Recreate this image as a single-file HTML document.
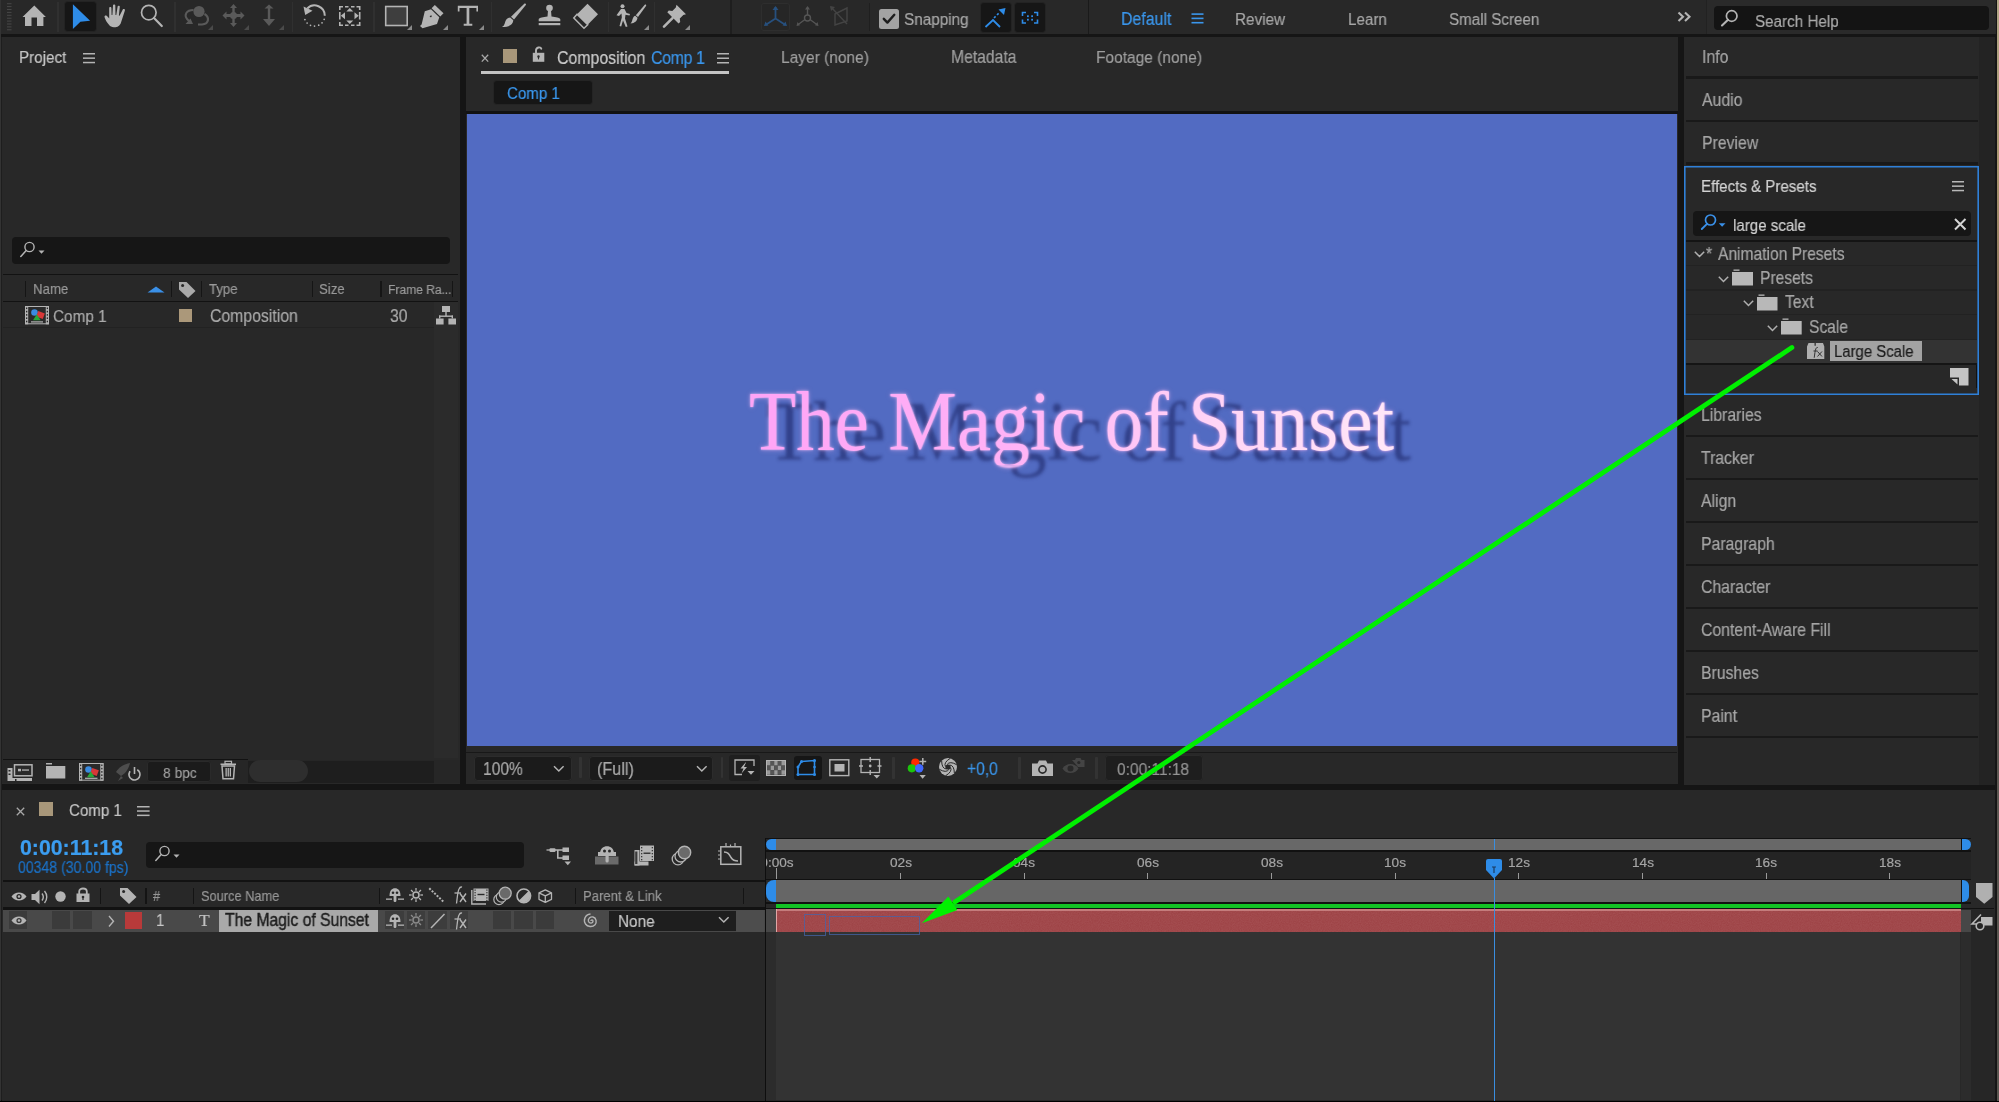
<!DOCTYPE html><html><head><meta charset="utf-8"><style>
html,body{margin:0;padding:0;width:1999px;height:1102px;overflow:hidden;background:#151515}
.a{position:absolute}
.t{white-space:nowrap;line-height:1;font-family:'Liberation Sans',sans-serif;-webkit-text-stroke:0.2px currentColor;will-change:transform}
svg{overflow:visible}
</style></head><body>
<div class="a" style="left:0px;top:0px;width:1999px;height:34px;background:#282828;"></div>
<div class="a" style="left:1.5px;top:37px;width:458.5px;height:747px;background:#282828;"></div>
<div class="a" style="left:466px;top:37px;width:1212px;height:747px;background:#282828;"></div>
<div class="a" style="left:1684px;top:37px;width:312px;height:748px;background:#282828;"></div>
<div class="a" style="left:1.5px;top:790px;width:1994.5px;height:310.5px;background:#282828;"></div>
<div class="a" style="left:0px;top:0px;width:1px;height:34px;background:#1a1a1a;"></div>
<svg class="a" style="left:7.2px;top:0px;" width="5" height="34" viewBox="0 0 5 34"><rect x="0" y="3.2" width="4.5" height="1" fill="#484848"/><rect x="0" y="6.1" width="4.5" height="1" fill="#484848"/><rect x="0" y="9.0" width="4.5" height="1" fill="#484848"/><rect x="0" y="11.9" width="4.5" height="1" fill="#484848"/><rect x="0" y="14.8" width="4.5" height="1" fill="#484848"/><rect x="0" y="17.7" width="4.5" height="1" fill="#484848"/><rect x="0" y="20.6" width="4.5" height="1" fill="#484848"/><rect x="0" y="23.5" width="4.5" height="1" fill="#484848"/><rect x="0" y="26.4" width="4.5" height="1" fill="#484848"/><rect x="0" y="29.3" width="4.5" height="1" fill="#484848"/></svg>
<svg class="a" style="left:22px;top:5px;" width="25" height="22" viewBox="0 0 25 22"><path d="M12.3 0.5 L23.9 12 L21.4 12 L21.4 21 L15 21 L15 12.4 L9.5 12.4 L9.5 21 L3 21 L3 12 L0.5 12 Z" fill="#b4b4b4"/></svg>
<div class="a" style="left:57.0px;top:2px;width:1.6px;height:30px;background:#303030;"></div>
<div class="a" style="left:64.6px;top:1.7px;width:31px;height:29px;background:#161616;border-radius:3px;box-shadow:0 0 0 1px #232323"></div>
<svg class="a" style="left:72px;top:4px;" width="19" height="25" viewBox="0 0 19 25"><path d="M0.9 0.25 L18.1 16.8 L8.4 17.7 L0.9 24.9 Z" fill="#2e8ce8"/></svg>
<svg class="a" style="left:104px;top:4px;" width="23" height="24" viewBox="0 0 23 24"><path d="M6 22 C3 19 1 15 0.5 13 C0.3 12 1.2 11.2 2.2 11.6 C3.3 12.1 4.5 14 5.2 14.5 L5.2 4 C5.2 2.8 7.4 2.8 7.4 4 L7.6 11 L8.4 11 L9 1.5 C9 0.2 11.3 0.2 11.3 1.5 L11.5 11 L12.3 11 L13.6 2.5 C13.8 1.3 15.9 1.5 15.8 2.8 L14.9 11.6 L15.6 11.8 L18.8 5.6 C19.3 4.6 21.3 5.2 20.9 6.4 L17.5 17 C16.5 21 14.5 23.2 11.5 23.2 C9 23.2 7.3 23 6 22 Z" fill="#b4b4b4"/></svg>
<svg class="a" style="left:139px;top:3px;" width="26" height="26" viewBox="0 0 26 26"><circle cx="9.8" cy="9.6" r="7.3" fill="none" stroke="#b4b4b4" stroke-width="1.7"/><path d="M15 15 L22.8 23" stroke="#b4b4b4" stroke-width="2.2" stroke-linecap="round"/></svg>
<div class="a" style="left:174.0px;top:2px;width:1.6px;height:30px;background:#303030;"></div>
<svg class="a" style="left:184px;top:5px;" width="28" height="22" viewBox="0 0 28 22"><circle cx="15" cy="6.5" r="5.6" fill="#5a5a5a"/><path d="M9.5 5 C2 5 0 10 3 14 L5 16" fill="none" stroke="#5a5a5a" stroke-width="2"/><path d="M1.5 19 L9 19 L6.5 13.5 Z" fill="#5a5a5a"/><path d="M20.5 9 C25.5 12 25.5 19 18 19.5 L14 19.5" fill="none" stroke="#5a5a5a" stroke-width="2.2"/></svg>
<svg class="a" style="left:207.5px;top:25.0px;" width="5" height="5" viewBox="0 0 5 5"><path d="M5 0 L5 5 L0 5 Z" fill="#4a4a4a"/></svg>
<svg class="a" style="left:221px;top:4px;" width="26" height="24" viewBox="0 0 26 24"><path d="M12.5 0 L16 4 L13.7 4 L13.7 10 L19.5 10 L19.5 7.5 L23.5 11.5 L19.5 15.5 L19.5 13 L13.7 13 L13.7 19 L16 19 L12.5 23 L9 19 L11.3 19 L11.3 13 L5.5 13 L5.5 15.5 L1.5 11.5 L5.5 7.5 L5.5 10 L11.3 10 L11.3 4 L9 4 Z" fill="#5a5a5a"/><circle cx="12.5" cy="11.5" r="3.5" fill="#5a5a5a"/></svg>
<svg class="a" style="left:243.5px;top:25.0px;" width="5" height="5" viewBox="0 0 5 5"><path d="M5 0 L5 5 L0 5 Z" fill="#4a4a4a"/></svg>
<svg class="a" style="left:261px;top:4px;" width="16" height="23" viewBox="0 0 16 23"><path d="M8 0.5 L12.5 4.5 L9.2 4.5 L9.2 15 L14 15 L8 22 L2 15 L6.8 15 L6.8 4.5 L3.5 4.5 Z" fill="#5a5a5a"/></svg>
<svg class="a" style="left:279.0px;top:25.0px;" width="5" height="5" viewBox="0 0 5 5"><path d="M5 0 L5 5 L0 5 Z" fill="#4a4a4a"/></svg>
<div class="a" style="left:291.5px;top:2px;width:1.6px;height:30px;background:#303030;"></div>
<svg class="a" style="left:303px;top:3.5px;" width="24" height="24" viewBox="0 0 24 24"><path d="M4.26 4.47 A10.3 10.3 0 0 1 21.80 11.80" fill="none" stroke="#b4b4b4" stroke-width="2"/><path d="M0.5 2.5 L2.2 11 L9.5 6.8 Z" fill="#b4b4b4"/><circle cx="21.18" cy="15.33" r="0.85" fill="#b4b4b4"/><circle cx="19.04" cy="18.82" r="0.85" fill="#b4b4b4"/><circle cx="15.71" cy="21.20" r="0.85" fill="#b4b4b4"/><circle cx="11.51" cy="22.10" r="0.85" fill="#b4b4b4"/><circle cx="7.50" cy="21.29" r="0.85" fill="#b4b4b4"/><circle cx="4.12" cy="18.98" r="0.85" fill="#b4b4b4"/><circle cx="1.90" cy="15.54" r="0.85" fill="#b4b4b4"/></svg>
<svg class="a" style="left:338px;top:5px;" width="26" height="22" viewBox="0 0 26 22"><path d="M1.8 5 L1.8 1.8 L5 1.8 M18.5 1.8 L21.7 1.8 L21.7 5 M21.7 17 L21.7 20.2 L18.5 20.2 M5 20.2 L1.8 20.2 L1.8 17" fill="none" stroke="#b4b4b4" stroke-width="1.6"/><path d="M7 1.8 L10.5 1.8 M13 1.8 L16.5 1.8 M7 20.2 L10.5 20.2 M13 20.2 L16.5 20.2" stroke="#b4b4b4" stroke-width="1.6"/><path d="M11.8 3 L15.3 6.5 L8.3 6.5 Z M11.8 19 L15.3 15.5 L8.3 15.5 Z M2.8 10.8 L7 7.3 L7 14.3 Z M20.7 10.8 L16.5 7.3 L16.5 14.3 Z" fill="#b4b4b4"/><rect x="1" y="7" width="1.6" height="7.5" fill="#b4b4b4"/><rect x="20.9" y="7" width="1.6" height="7.5" fill="#b4b4b4"/></svg>
<div class="a" style="left:373.2px;top:2px;width:1.6px;height:30px;background:#303030;"></div>
<svg class="a" style="left:384px;top:5px;" width="26" height="23" viewBox="0 0 26 23"><rect x="1.7" y="1.5" width="21.5" height="19" fill="#3e3e3e" stroke="#b4b4b4" stroke-width="1.6"/></svg>
<svg class="a" style="left:406.5px;top:25.0px;" width="5" height="5" viewBox="0 0 5 5"><path d="M5 0 L5 5 L0 5 Z" fill="#8a8a8a"/></svg>
<svg class="a" style="left:419px;top:4px;" width="26" height="24" viewBox="0 0 26 24"><path d="M15.8 1 L24.5 9.2 L21.3 12.4 L12.6 4.2 Z" fill="#b4b4b4"/><path d="M12 5.2 L20.3 13.2 L18 20 L3.5 24.3 L1 22 L10.7 12.6 C11 13.4 11.8 13.6 12.4 13.1 C13 12.5 12.8 11.6 12 11.3 L2.6 20.6 L5.8 7.3 Z" fill="#b4b4b4"/></svg>
<svg class="a" style="left:442.5px;top:25.0px;" width="5" height="5" viewBox="0 0 5 5"><path d="M5 0 L5 5 L0 5 Z" fill="#8a8a8a"/></svg>
<svg class="a" style="left:457px;top:5px;" width="23" height="22" viewBox="0 0 23 22"><path d="M0.8 0.8 L21 0.8 L21 6.5 L19.4 6.5 L19.4 3 L12.3 3 L12.3 18.8 L15.3 18.8 L15.3 20.8 L6.7 20.8 L6.7 18.8 L9.6 18.8 L9.6 3 L2.5 3 L2.5 6.5 L0.8 6.5 Z" fill="#b4b4b4"/></svg>
<svg class="a" style="left:478.5px;top:25.0px;" width="5" height="5" viewBox="0 0 5 5"><path d="M5 0 L5 5 L0 5 Z" fill="#8a8a8a"/></svg>
<div class="a" style="left:490.5px;top:2px;width:1.6px;height:30px;background:#303030;"></div>
<svg class="a" style="left:501px;top:3px;" width="26" height="25" viewBox="0 0 26 25"><path d="M23.5 0.6 C24.6 0 25.4 1 24.8 2 L13 16.5 L10 13.8 Z" fill="#b4b4b4"/><path d="M9.2 14.5 L12.3 17.3 C12 21.5 8.5 24 1 24 C4 22.5 3.5 19.5 5 17 C6 15.3 7.7 14.5 9.2 14.5 Z" fill="#b4b4b4"/></svg>
<svg class="a" style="left:537px;top:4px;" width="25" height="22" viewBox="0 0 25 22"><circle cx="12.5" cy="4" r="3.3" fill="#b4b4b4"/><path d="M11 6.5 L14 6.5 L14.5 12.5 C19 13 22.5 13.5 23.3 15.2 L23.3 17.2 L1.7 17.2 L1.7 15.2 C2.5 13.5 6 13 10.5 12.5 Z" fill="#b4b4b4"/><rect x="1.7" y="19" width="21.6" height="2.2" fill="#b4b4b4"/></svg>
<svg class="a" style="left:573px;top:3px;" width="26" height="26" viewBox="0 0 26 26"><path d="M14.5 0.8 L25 11.3 L14.7 21.8 L4 11.3 Z" fill="#b4b4b4"/><path d="M4 11.3 L14.7 21.8 L11 25.3 L0.8 15 Z" fill="none" stroke="#b4b4b4" stroke-width="1.5"/></svg>
<div class="a" style="left:607.5px;top:2px;width:1.6px;height:30px;background:#303030;"></div>
<svg class="a" style="left:616px;top:4px;" width="31" height="24" viewBox="0 0 31 24"><circle cx="6.5" cy="2.2" r="2" fill="#b4b4b4"/><path d="M5 5 L8.5 5 L10.5 9 L14 10 L13.5 11.5 L9.5 10.8 L9 14.5 L11.5 22.5 L9.8 23 L7 16.5 L5.2 22.5 L3.5 22 L5.8 13.5 L5.5 9.5 L3 12 L0.5 11.3 Z" fill="#b4b4b4"/><path d="M29 0.5 C30 0.3 30.5 1 30 2 L22 13 L19.8 11.2 Z" fill="#b4b4b4"/><path d="M19.2 11.8 L21.5 13.7 C21 17 19 19 14.5 19.5 C16.3 18 16 16 17 14 C17.5 12.8 18.3 12 19.2 11.8 Z" fill="#b4b4b4"/></svg>
<svg class="a" style="left:643.5px;top:25.0px;" width="5" height="5" viewBox="0 0 5 5"><path d="M5 0 L5 5 L0 5 Z" fill="#8a8a8a"/></svg>
<div class="a" style="left:653.5px;top:2px;width:1.6px;height:30px;background:#303030;"></div>
<svg class="a" style="left:663px;top:4px;" width="24" height="24" viewBox="0 0 24 24"><path d="M13.5 0.8 L23 10.3 L20.3 11 L16.8 14.5 L17.2 18 L15.5 19.5 L4.3 8.3 L5.8 6.6 L9.3 7 L12.8 3.5 Z" fill="#b4b4b4"/><path d="M9.5 14.2 L1 22.7" stroke="#b4b4b4" stroke-width="2.6" stroke-linecap="round"/></svg>
<svg class="a" style="left:685.0px;top:25.0px;" width="5" height="5" viewBox="0 0 5 5"><path d="M5 0 L5 5 L0 5 Z" fill="#8a8a8a"/></svg>
<div class="a" style="left:730.0px;top:0px;width:1.6px;height:34px;background:#1e1e1e;"></div>
<div class="a" style="left:761px;top:3px;width:29px;height:28px;background:#262626;border-radius:3px;box-shadow:inset 0 0 0 1px #2e2e2e"></div>
<svg class="a" style="left:763px;top:6px;" width="25" height="22" viewBox="0 0 25 22"><path d="M12.5 1 L12.5 12.5 M12.5 12.5 L2.5 19 M12.5 12.5 L22.5 19" stroke="#27507e" stroke-width="1.8"/><path d="M12.5 0 L15.5 4 L9.5 4 Z M1 20 L2.5 15.5 L5.5 19.5 Z M24 20 L22.5 15.5 L19.5 19.5 Z" fill="#27507e"/></svg>
<svg class="a" style="left:796px;top:6px;" width="23" height="22" viewBox="0 0 23 22"><circle cx="11.5" cy="12" r="3" fill="none" stroke="#555" stroke-width="1.4"/><path d="M11.5 1 L11.5 9 M9 13.5 L1.5 19 M14 13.5 L21.5 19" stroke="#555" stroke-width="1.4"/><path d="M11.5 0 L14 3.5 L9 3.5 Z M0.5 20 L1.5 16 L4 19.3 Z M22.5 20 L21.5 16 L19 19.3 Z" fill="#555"/></svg>
<svg class="a" style="left:830px;top:6px;" width="20" height="20" viewBox="0 0 20 20"><path d="M5 8 L17 2 L17 15 L5 19 Z" fill="none" stroke="#444" stroke-width="1.4"/><path d="M1 1 L17 18" stroke="#444" stroke-width="1.4"/><path d="M0 0 L5 1 L1 5 Z" fill="#444"/></svg>
<div class="a" style="left:868.5px;top:3px;width:1.6px;height:28px;background:#1f1f1f;"></div>
<div class="a" style="left:879px;top:9px;width:20px;height:19.5px;background:#a3a3a3;border-radius:2.5px"></div>
<svg class="a" style="left:879px;top:9px;" width="20" height="19.5" viewBox="0 0 20 19.5"><path d="M4.8 9.8 L8.4 13.6 L15.3 5.8" fill="none" stroke="#1d1d1d" stroke-width="2.4" stroke-linecap="round" stroke-linejoin="round"/></svg>
<div class="a t" style="left:903.5px;top:10.50px;font-size:17.14px;color:#a6a6a6;font-weight:400;font-family:'Liberation Sans',sans-serif;transform-origin:0 0;transform:scaleX(0.8929);">Snapping</div>
<div class="a" style="left:981px;top:3px;width:29.5px;height:29px;background:#161616;border-radius:3px;box-shadow:0 0 0 1px #232323"></div>
<svg class="a" style="left:983px;top:5px;" width="26" height="25" viewBox="0 0 26 25"><path d="M2.5 22 L10 15 L17 22" fill="none" stroke="#2e8ce8" stroke-width="1.8"/><path d="M11 13 L12.6 11.4 M14 10 L15.6 8.4" stroke="#2e8ce8" stroke-width="1.6"/><path d="M15.5 4.5 L22.5 3 L21 10 Z" fill="#2e8ce8"/></svg>
<div class="a" style="left:1015px;top:3px;width:30px;height:29px;background:#161616;border-radius:3px;box-shadow:0 0 0 1px #232323"></div>
<svg class="a" style="left:1017px;top:5px;" width="26" height="25" viewBox="0 0 26 25"><path d="M5.5 11 L5.5 7.5 L9 7.5 M17 7.5 L20.5 7.5 L20.5 11 M20.5 14.5 L20.5 18 L17 18 M9 18 L5.5 18 L5.5 14.5" fill="none" stroke="#2e8ce8" stroke-width="1.6"/><rect x="10" y="10.3" width="1.8" height="1.8" fill="#2e8ce8"/><rect x="14.2" y="10.3" width="1.8" height="1.8" fill="#2e8ce8"/><rect x="10" y="13.8" width="1.8" height="1.8" fill="#2e8ce8"/><rect x="14.2" y="13.8" width="1.8" height="1.8" fill="#2e8ce8"/></svg>
<div class="a" style="left:1087.5px;top:0px;width:1.5px;height:34px;background:#1a1a1a;"></div>
<div class="a t" style="left:1121px;top:10.50px;font-size:17.81px;color:#3a96ec;font-weight:400;font-family:'Liberation Sans',sans-serif;transform-origin:0 0;transform:scaleX(0.8929);">Default</div>
<svg class="a" style="left:1190.5px;top:12.5px;" width="13" height="11" viewBox="0 0 13 11"><rect x="0.5" y="0.3" width="12" height="1.6" fill="#3a96ec"/><rect x="0.5" y="4.6" width="12" height="1.6" fill="#3a96ec"/><rect x="0.5" y="8.9" width="12" height="1.6" fill="#3a96ec"/></svg>
<div class="a t" style="left:1235px;top:10.50px;font-size:17.14px;color:#a6a6a6;font-weight:400;font-family:'Liberation Sans',sans-serif;transform-origin:0 0;transform:scaleX(0.8929);">Review</div>
<div class="a t" style="left:1348px;top:10.50px;font-size:17.02px;color:#a6a6a6;font-weight:400;font-family:'Liberation Sans',sans-serif;transform-origin:0 0;transform:scaleX(0.8929);">Learn</div>
<div class="a t" style="left:1449px;top:10.50px;font-size:17.02px;color:#a6a6a6;font-weight:400;font-family:'Liberation Sans',sans-serif;transform-origin:0 0;transform:scaleX(0.8929);">Small Screen</div>
<svg class="a" style="left:1677px;top:10.5px;" width="16" height="12" viewBox="0 0 16 12"><path d="M1.5 1.5 L6 5.8 L1.5 10 M8 1.5 L12.5 5.8 L8 10" fill="none" stroke="#b4b4b4" stroke-width="2.1"/></svg>
<div class="a" style="left:1706px;top:0px;width:1.2px;height:34px;background:#222;"></div>
<div class="a" style="left:1707.2px;top:0px;width:288px;height:34px;background:#2a2a2a;"></div>
<div class="a" style="left:1714px;top:6px;width:275px;height:23.5px;background:#141414;border-radius:4px"></div>
<svg class="a" style="left:1720px;top:9px;" width="20" height="18" viewBox="0 0 20 18"><circle cx="11.7" cy="7" r="5.3" fill="none" stroke="#b4b4b4" stroke-width="1.7"/><path d="M8 10.8 L2 16.5" stroke="#b4b4b4" stroke-width="2.1" stroke-linecap="round"/></svg>
<div class="a t" style="left:1754.5px;top:12.50px;font-size:17.02px;color:#aaaaaa;font-weight:400;font-family:'Liberation Sans',sans-serif;transform-origin:0 0;transform:scaleX(0.8929);">Search Help</div>
<div class="a" style="left:1996px;top:0px;width:3px;height:34px;background:#1a1a1a;"></div>
<div class="a t" style="left:19.2px;top:49.40px;font-size:17.02px;color:#c4c4c4;font-weight:400;font-family:'Liberation Sans',sans-serif;transform-origin:0 0;transform:scaleX(0.8929);">Project</div>
<svg class="a" style="left:83px;top:52.8px;" width="12" height="12" viewBox="0 0 12 12"><rect x="0" y="0.00" width="12" height="1.5" fill="#b4b4b4"/><rect x="0" y="4.40" width="12" height="1.5" fill="#b4b4b4"/><rect x="0" y="8.80" width="12" height="1.5" fill="#b4b4b4"/></svg>
<div class="a" style="left:11.8px;top:237px;width:438.2px;height:26.5px;background:#161616;border-radius:4px"></div>
<svg class="a" style="left:19px;top:241px;" width="27" height="18" viewBox="0 0 27 18"><circle cx="10.5" cy="6" r="4.6" fill="none" stroke="#b4b4b4" stroke-width="1.4"/><path d="M7.2 9.5 L1.8 15.5" stroke="#b4b4b4" stroke-width="1.5" stroke-linecap="round"/><path d="M19.5 9.5 L25.5 9.5 L22.5 12.8 Z" fill="#b4b4b4"/></svg>
<div class="a" style="left:3px;top:273.5px;width:455px;height:1.8px;background:#121212;"></div>
<div class="a" style="left:24.7px;top:281px;width:1.3px;height:16px;background:#151515;"></div>
<div class="a" style="left:171px;top:281px;width:1.3px;height:16px;background:#151515;"></div>
<div class="a" style="left:201px;top:281px;width:1.3px;height:16px;background:#151515;"></div>
<div class="a" style="left:311.5px;top:281px;width:1.3px;height:16px;background:#151515;"></div>
<div class="a" style="left:380.4px;top:281px;width:1.3px;height:16px;background:#151515;"></div>
<div class="a" style="left:451.7px;top:281px;width:1.3px;height:16px;background:#151515;"></div>
<div class="a t" style="left:33px;top:282.00px;font-size:14.78px;color:#999999;font-weight:400;font-family:'Liberation Sans',sans-serif;transform-origin:0 0;transform:scaleX(0.8929);">Name</div>
<svg class="a" style="left:146.5px;top:285.5px;" width="19" height="7" viewBox="0 0 19 7"><path d="M0.5 6.5 L9 0.5 L17.5 6.5 Z" fill="#3a90e8"/></svg>
<svg class="a" style="left:177.5px;top:281px;" width="19" height="17" viewBox="0 0 19 17"><path d="M1 1 L8.5 1 L17.5 10 L10 17 L1 8.5 Z" fill="#aaaaaa"/><circle cx="4.6" cy="4.6" r="1.5" fill="#282828"/></svg>
<div class="a t" style="left:209px;top:282.00px;font-size:14.78px;color:#999999;font-weight:400;font-family:'Liberation Sans',sans-serif;transform-origin:0 0;transform:scaleX(0.8929);">Type</div>
<div class="a t" style="left:319px;top:282.00px;font-size:14.78px;color:#999999;font-weight:400;font-family:'Liberation Sans',sans-serif;transform-origin:0 0;transform:scaleX(0.8929);">Size</div>
<div class="a t" style="left:388px;top:283.00px;font-size:13.66px;color:#999999;font-weight:400;font-family:'Liberation Sans',sans-serif;transform-origin:0 0;transform:scaleX(0.8929);letter-spacing:-0.1px">Frame Ra...</div>
<div class="a" style="left:3px;top:300.8px;width:455px;height:1.6px;background:#121212;"></div>
<div class="a" style="left:434.4px;top:302.4px;width:23.6px;height:455.9px;background:#2b2b2b;"></div>
<div class="a" style="left:3px;top:327px;width:431.4px;height:1px;background:#222;"></div>
<svg class="a" style="left:25.4px;top:306.4px;" width="24" height="18.3" viewBox="0 0 24 18.3"><rect x="0.5" y="0.5" width="23" height="17.3" fill="#2a2a2a" stroke="#b4b4b4" stroke-width="1"/><rect x="0" y="0" width="3.2" height="18.3" fill="#b4b4b4"/><rect x="20.8" y="0" width="3.2" height="18.3" fill="#b4b4b4"/><rect x="1" y="1.5" width="1.3" height="1.6" fill="#2a2a2a"/><rect x="21.7" y="1.5" width="1.3" height="1.6" fill="#2a2a2a"/><rect x="1" y="4.8" width="1.3" height="1.6" fill="#2a2a2a"/><rect x="21.7" y="4.8" width="1.3" height="1.6" fill="#2a2a2a"/><rect x="1" y="8.1" width="1.3" height="1.6" fill="#2a2a2a"/><rect x="21.7" y="8.1" width="1.3" height="1.6" fill="#2a2a2a"/><rect x="1" y="11.4" width="1.3" height="1.6" fill="#2a2a2a"/><rect x="21.7" y="11.4" width="1.3" height="1.6" fill="#2a2a2a"/><rect x="1" y="14.7" width="1.3" height="1.6" fill="#2a2a2a"/><rect x="21.7" y="14.7" width="1.3" height="1.6" fill="#2a2a2a"/><rect x="6" y="15.3" width="12" height="1.2" fill="#b4b4b4"/><circle cx="9.5" cy="6.5" r="3.3" fill="#3a8be0"/><rect x="12" y="6" width="7" height="6" fill="#d83838" transform="rotate(20 15.5 9)"/><path d="M8 14.3 L11.8 8.3 L15.6 14.3 Z" fill="#28a838"/></svg>
<div class="a t" style="left:53px;top:308.30px;font-size:17.14px;color:#aaaaaa;font-weight:400;font-family:'Liberation Sans',sans-serif;transform-origin:0 0;transform:scaleX(0.8929);">Comp 1</div>
<div class="a" style="left:178.7px;top:309px;width:13.3px;height:13px;background:#ab987a;"></div>
<div class="a t" style="left:210.4px;top:308.30px;font-size:17.70px;color:#aaaaaa;font-weight:400;font-family:'Liberation Sans',sans-serif;transform-origin:0 0;transform:scaleX(0.8929);">Composition</div>
<div class="a t" style="left:390px;top:308.30px;font-size:17.70px;color:#aaaaaa;font-weight:400;font-family:'Liberation Sans',sans-serif;transform-origin:0 0;transform:scaleX(0.8929);">30</div>
<svg class="a" style="left:436px;top:306px;" width="20" height="19" viewBox="0 0 20 19"><rect x="6" y="0" width="8" height="6" fill="#b4b4b4"/><rect x="9.3" y="6" width="1.4" height="4" fill="#b4b4b4"/><rect x="3" y="9.5" width="14" height="1.4" fill="#b4b4b4"/><rect x="3" y="9.5" width="1.4" height="3" fill="#b4b4b4"/><rect x="15.6" y="9.5" width="1.4" height="3" fill="#b4b4b4"/><rect x="0" y="12.5" width="7.6" height="6" fill="#b4b4b4"/><rect x="12.4" y="12.5" width="7.6" height="6" fill="#b4b4b4"/></svg>
<div class="a" style="left:3px;top:758.8px;width:245px;height:1.6px;background:#121212;"></div>
<div class="a" style="left:1.5px;top:760.4px;width:458.5px;height:23px;background:#262626;"></div>
<div class="a" style="left:248px;top:761px;width:186px;height:22px;background:#1e1e1e;"></div>
<svg class="a" style="left:6.5px;top:763.5px;" width="26" height="17.5" viewBox="0 0 26 17.5"><rect x="7.5" y="0.8" width="17.5" height="11" fill="#2a2a2a" stroke="#b4b4b4" stroke-width="1.5"/><rect x="11" y="4.8" width="3" height="2.5" fill="#b4b4b4"/><rect x="15" y="5.4" width="7" height="1.3" fill="#b4b4b4"/><path d="M0.5 4 L5.5 4 L5.5 14 L25 14 L25 17 L0.5 17 Z" fill="#b4b4b4"/><rect x="1.5" y="6" width="2" height="1.5" fill="#262626"/><rect x="1.5" y="9.5" width="2" height="1.5" fill="#262626"/><rect x="8" y="15" width="1.5" height="2" fill="#262626"/></svg>
<svg class="a" style="left:45.5px;top:762.5px;" width="20" height="16" viewBox="0 0 20 16"><rect x="0" y="3" width="19.3" height="12.5" fill="#b4b4b4"/><rect x="0" y="0" width="6" height="1.5" fill="#b4b4b4"/></svg>
<svg class="a" style="left:78.8px;top:763px;" width="24.5" height="17.7" viewBox="0 0 24.5 17.7"><rect x="0.5" y="0.5" width="23.5" height="16.7" fill="#2a2a2a" stroke="#b4b4b4" stroke-width="1"/><rect x="0" y="0" width="3.2" height="17.7" fill="#b4b4b4"/><rect x="21.3" y="0" width="3.2" height="17.7" fill="#b4b4b4"/><rect x="1" y="1.5" width="1.3" height="1.6" fill="#2a2a2a"/><rect x="22.2" y="1.5" width="1.3" height="1.6" fill="#2a2a2a"/><rect x="1" y="4.8" width="1.3" height="1.6" fill="#2a2a2a"/><rect x="22.2" y="4.8" width="1.3" height="1.6" fill="#2a2a2a"/><rect x="1" y="8.1" width="1.3" height="1.6" fill="#2a2a2a"/><rect x="22.2" y="8.1" width="1.3" height="1.6" fill="#2a2a2a"/><rect x="1" y="11.4" width="1.3" height="1.6" fill="#2a2a2a"/><rect x="22.2" y="11.4" width="1.3" height="1.6" fill="#2a2a2a"/><rect x="1" y="14.7" width="1.3" height="1.6" fill="#2a2a2a"/><rect x="22.2" y="14.7" width="1.3" height="1.6" fill="#2a2a2a"/><rect x="6" y="14.7" width="12.5" height="1.2" fill="#b4b4b4"/><circle cx="9.5" cy="6.5" r="3.3" fill="#3a8be0"/><rect x="12" y="6" width="7" height="6" fill="#d83838" transform="rotate(20 15.5 9)"/><path d="M8 14.3 L11.8 8.3 L15.6 14.3 Z" fill="#28a838"/></svg>
<svg class="a" style="left:115px;top:761.5px;" width="27" height="20" viewBox="0 0 27 20"><path d="M1 10 C4 5 9 2 15 1 C14 6 11 11 6 14 Z" fill="#4d4d4d"/><path d="M6 14 L3 19 L8 16 Z" fill="#4d4d4d"/><circle cx="19.5" cy="12.5" r="5.5" fill="none" stroke="#b4b4b4" stroke-width="1.6" stroke-dasharray="26 8.5" transform="rotate(-60 19.5 12.5)"/><rect x="18.7" y="5" width="1.6" height="7" fill="#b4b4b4"/></svg>
<div class="a" style="left:147px;top:761.2px;width:64px;height:20.8px;background:#1b1b1b;border-radius:3px;box-shadow:inset 0 0 0 1px #2a2a2a"></div>
<div class="a t" style="left:163px;top:764.60px;font-size:15.46px;color:#9e9e9e;font-weight:400;font-family:'Liberation Sans',sans-serif;transform-origin:0 0;transform:scaleX(0.8929);">8 bpc</div>
<svg class="a" style="left:220px;top:761px;" width="17" height="19" viewBox="0 0 17 19"><rect x="0.5" y="2.5" width="15.5" height="1.6" fill="#b4b4b4"/><rect x="5" y="0.3" width="6.5" height="2.6" fill="none" stroke="#b4b4b4" stroke-width="1.2"/><path d="M2 5 L14.5 5 L13.5 17.8 L3 17.8 Z" fill="none" stroke="#b4b4b4" stroke-width="1.5"/><rect x="5.5" y="7" width="1.3" height="8.5" fill="#b4b4b4"/><rect x="9.7" y="7" width="1.3" height="8.5" fill="#b4b4b4"/><rect x="7.6" y="7" width="1.3" height="8.5" fill="#b4b4b4"/></svg>
<div class="a" style="left:249px;top:760.2px;width:59px;height:22px;background:#2e2e2e;border-radius:11px"></div>
<svg class="a" style="left:480.5px;top:53.5px;" width="8" height="9" viewBox="0 0 8 9"><path d="M0.8 0.8 L7.2 7.6 M7.2 0.8 L0.8 7.6" stroke="#a8a8a8" stroke-width="1.3"/></svg>
<div class="a" style="left:502.8px;top:48.8px;width:14.2px;height:14.5px;background:#a8977a;"></div>
<svg class="a" style="left:532px;top:46px;" width="13" height="17" viewBox="0 0 13 17"><path d="M4 7.5 L4 4.5 C4 1.3 8.8 0.2 9.3 2.8" fill="none" stroke="#b4b4b4" stroke-width="1.9" stroke-linecap="round"/><rect x="0.8" y="6.8" width="11.5" height="9" fill="#b4b4b4"/><path d="M6.5 9.3 C5.2 9.3 5 10.7 5.6 11.2 L6.5 14 L7.4 11.2 C8 10.7 7.8 9.3 6.5 9.3 Z" fill="#282828"/></svg>
<div class="a t" style="left:557.3px;top:49.50px;font-size:17.81px;color:#cdcdcd;font-weight:400;font-family:'Liberation Sans',sans-serif;transform-origin:0 0;transform:scaleX(0.8929);">Composition</div>
<div class="a t" style="left:650.6px;top:49.50px;font-size:17.81px;color:#3a96ec;font-weight:400;font-family:'Liberation Sans',sans-serif;transform-origin:0 0;transform:scaleX(0.8929);letter-spacing:-0.4px">Comp 1</div>
<svg class="a" style="left:717px;top:52.8px;" width="12" height="12" viewBox="0 0 12 12"><rect x="0" y="0.00" width="12" height="1.5" fill="#b4b4b4"/><rect x="0" y="4.50" width="12" height="1.5" fill="#b4b4b4"/><rect x="0" y="9.00" width="12" height="1.5" fill="#b4b4b4"/></svg>
<div class="a" style="left:481px;top:71.3px;width:248px;height:3px;background:#c4c4c4;"></div>
<div class="a t" style="left:780.5px;top:49.30px;font-size:17.36px;color:#9e9e9e;font-weight:400;font-family:'Liberation Sans',sans-serif;transform-origin:0 0;transform:scaleX(0.8929);">Layer (none)</div>
<div class="a t" style="left:951px;top:49.30px;font-size:17.58px;color:#9e9e9e;font-weight:400;font-family:'Liberation Sans',sans-serif;transform-origin:0 0;transform:scaleX(0.8929);">Metadata</div>
<div class="a t" style="left:1095.7px;top:49.30px;font-size:17.36px;color:#9e9e9e;font-weight:400;font-family:'Liberation Sans',sans-serif;transform-origin:0 0;transform:scaleX(0.8929);">Footage (none)</div>
<div class="a" style="left:493.8px;top:81px;width:97.8px;height:23.3px;background:#161616;border-radius:3px;box-shadow:0 0 0 1px #242424"></div>
<div class="a t" style="left:506.5px;top:85.70px;font-size:16.91px;color:#3a96ec;font-weight:400;font-family:'Liberation Sans',sans-serif;transform-origin:0 0;transform:scaleX(0.8929);">Comp 1</div>
<div class="a" style="left:466px;top:111px;width:1212px;height:2.5px;background:#121212;"></div>
<div class="a" style="left:466.7px;top:113.5px;width:1210.3px;height:632.5px;background:#526bc2;"></div>
<div class="a" style="left:466px;top:751.5px;width:1211px;height:1.3px;background:#181818;"></div>
<div class="a t" style="left:766px;top:389.9px;font-family:'Liberation Serif',serif;font-size:84.5px;transform-origin:0 0;transform:scaleX(0.913);-webkit-text-stroke:0;color:transparent;text-shadow:0 0 3.5px rgba(30,40,105,0.62)">The Magic of Sunset</div>
<div class="a t" style="left:749px;top:379.9px;font-family:'Liberation Serif',serif;font-size:84.5px;transform-origin:0 0;transform:scaleX(0.913);-webkit-text-stroke:0;color:transparent;text-shadow:0 0 2px rgba(255,190,250,0.9),0 0 5px rgba(255,190,250,0.5)">The Magic of Sunset</div>
<div class="a t" style="left:749px;top:379.9px;font-family:'Liberation Serif',serif;font-size:84.5px;transform-origin:0 0;transform:scaleX(0.913);-webkit-text-stroke:0;color:transparent;background:linear-gradient(90deg,#ffa4f6 0%,#ffb2f6 40%,#ffd4f6 72%,#ffe8f8 100%);-webkit-background-clip:text;background-clip:text">The Magic of Sunset</div>
<div class="a" style="left:473.6px;top:755.6px;width:98px;height:25.4px;background:#1b1b1b;border-radius:4px;box-shadow:inset 0 0 0 1px #2c2c2c"></div>
<div class="a t" style="left:483.2px;top:760.80px;font-size:17.47px;color:#aaaaaa;font-weight:400;font-family:'Liberation Sans',sans-serif;transform-origin:0 0;transform:scaleX(0.8929);">100%</div>
<svg class="a" style="left:553px;top:764.5px;" width="12" height="8" viewBox="0 0 12 8"><path d="M1 1.2 L5.8 6 L10.6 1.2" fill="none" stroke="#b4b4b4" stroke-width="1.5"/></svg>
<div class="a" style="left:579px;top:757px;width:2.5px;height:21px;background:#333;border-radius:1px"></div>
<div class="a" style="left:588.6px;top:755.6px;width:124.4px;height:25.4px;background:#1b1b1b;border-radius:4px;box-shadow:inset 0 0 0 1px #2c2c2c"></div>
<div class="a t" style="left:597.2px;top:759.80px;font-size:18.14px;color:#aaaaaa;font-weight:400;font-family:'Liberation Sans',sans-serif;transform-origin:0 0;transform:scaleX(0.8929);">(Full)</div>
<svg class="a" style="left:695.5px;top:764.5px;" width="12" height="8" viewBox="0 0 12 8"><path d="M1 1.2 L5.8 6 L10.6 1.2" fill="none" stroke="#b4b4b4" stroke-width="1.5"/></svg>
<div class="a" style="left:720.5px;top:757px;width:2.5px;height:21px;background:#333;border-radius:1px"></div>
<div class="a" style="left:729px;top:754.8px;width:31px;height:26.6px;background:#1f1f1f;border-radius:3px"></div>
<svg class="a" style="left:734px;top:758.5px;" width="21" height="18" viewBox="0 0 21 18"><path d="M8 15.5 L1 15.5 L1 1 L20 1 L20 7" fill="none" stroke="#b4b4b4" stroke-width="1.3"/><path d="M11.5 3.5 L6.5 9.5 L9.5 9.5 L7.5 14.5 L13 8 L10 8 L12 3.5 Z" fill="#b4b4b4"/><path d="M13.5 12 L20.5 12 L17 15.8 Z" fill="#b4b4b4"/></svg>
<svg class="a" style="left:766px;top:760px;" width="20" height="16" viewBox="0 0 20 16"><rect x="0.5" y="0.5" width="19" height="15" fill="none" stroke="#b4b4b4" stroke-width="1"/><rect x="1.0" y="1.0" width="3.6" height="4.6" fill="#9a9a9a"/><rect x="1.0" y="5.6" width="3.6" height="4.6" fill="#555"/><rect x="1.0" y="10.2" width="3.6" height="4.6" fill="#9a9a9a"/><rect x="4.6" y="1.0" width="3.6" height="4.6" fill="#555"/><rect x="4.6" y="5.6" width="3.6" height="4.6" fill="#9a9a9a"/><rect x="4.6" y="10.2" width="3.6" height="4.6" fill="#555"/><rect x="8.2" y="1.0" width="3.6" height="4.6" fill="#9a9a9a"/><rect x="8.2" y="5.6" width="3.6" height="4.6" fill="#555"/><rect x="8.2" y="10.2" width="3.6" height="4.6" fill="#9a9a9a"/><rect x="11.8" y="1.0" width="3.6" height="4.6" fill="#555"/><rect x="11.8" y="5.6" width="3.6" height="4.6" fill="#9a9a9a"/><rect x="11.8" y="10.2" width="3.6" height="4.6" fill="#555"/><rect x="15.4" y="1.0" width="3.6" height="4.6" fill="#9a9a9a"/><rect x="15.4" y="5.6" width="3.6" height="4.6" fill="#555"/><rect x="15.4" y="10.2" width="3.6" height="4.6" fill="#9a9a9a"/></svg>
<div class="a" style="left:793.5px;top:756px;width:28.3px;height:24px;background:#161616;border-radius:3px"></div>
<svg class="a" style="left:796px;top:758px;" width="23" height="19" viewBox="0 0 23 19"><path d="M5.5 3.5 L18.5 2.5 L18.5 16.5 L2 16.5 L2 9 Z" fill="none" stroke="#2e8ce8" stroke-width="1.6"/><circle cx="5.5" cy="3.5" r="1.5" fill="#2e8ce8"/><circle cx="18.5" cy="2.5" r="1.5" fill="#2e8ce8"/><circle cx="18.5" cy="16.5" r="1.5" fill="#2e8ce8"/><circle cx="2" cy="16.5" r="1.5" fill="#2e8ce8"/><circle cx="2" cy="9" r="1.5" fill="#2e8ce8"/><circle cx="18.5" cy="9" r="1.3" fill="#2e8ce8"/></svg>
<svg class="a" style="left:829px;top:758.5px;" width="21" height="18" viewBox="0 0 21 18"><rect x="0.8" y="0.8" width="19" height="15.8" fill="none" stroke="#b4b4b4" stroke-width="1.4"/><rect x="5.5" y="5" width="10" height="7.5" fill="#b4b4b4"/></svg>
<svg class="a" style="left:858.5px;top:757px;" width="23" height="22" viewBox="0 0 23 22"><rect x="2" y="2.5" width="18.5" height="13" fill="none" stroke="#b4b4b4" stroke-width="1.3"/><path d="M11.2 0 L11.2 5 M11.2 13 L11.2 18 M0 9 L4 9 M18.5 9 L22.5 9" stroke="#b4b4b4" stroke-width="1.4"/><circle cx="11.2" cy="9" r="1.4" fill="#b4b4b4"/><path d="M14.5 18 L21 18 L17.8 21.5 Z" fill="#b4b4b4"/></svg>
<div class="a" style="left:892px;top:757px;width:2.5px;height:22px;background:#333;border-radius:1px"></div>
<svg class="a" style="left:906px;top:757px;" width="22" height="23" viewBox="0 0 22 23"><circle cx="9.3" cy="5.5" r="4.1" fill="#ff2a00"/><circle cx="5.8" cy="11.3" r="4.1" fill="#1cc40c"/><circle cx="13.2" cy="11.3" r="4.2" fill="#4068ff"/><path d="M16.8 1 L16.8 7.8 M13.4 4.4 L20.2 4.4" stroke="#b4b4b4" stroke-width="1.5"/><path d="M13.5 18 L19.8 18 L16.6 21.8 Z" fill="#b4b4b4"/></svg>
<svg class="a" style="left:939px;top:758px;" width="18" height="18" viewBox="0 0 18 18"><circle cx="9" cy="9" r="9" fill="#b4b4b4"/><path d="M11.56 9.45 Q13.60 13.60 6.67 17.69" fill="none" stroke="#282828" stroke-width="1"/><path d="M9.89 11.44 Q7.32 15.28 0.31 11.33" fill="none" stroke="#282828" stroke-width="1"/><path d="M7.33 10.99 Q2.72 10.68 2.64 2.64" fill="none" stroke="#282828" stroke-width="1"/><path d="M6.44 8.55 Q4.40 4.40 11.33 0.31" fill="none" stroke="#282828" stroke-width="1"/><path d="M8.11 6.56 Q10.68 2.72 17.69 6.67" fill="none" stroke="#282828" stroke-width="1"/><path d="M10.67 7.01 Q15.28 7.32 15.36 15.36" fill="none" stroke="#282828" stroke-width="1"/><circle cx="9" cy="9" r="2.6" fill="#282828"/></svg>
<div class="a t" style="left:967.2px;top:761.00px;font-size:17.47px;color:#3a96ec;font-weight:400;font-family:'Liberation Sans',sans-serif;transform-origin:0 0;transform:scaleX(0.8929);">+0,0</div>
<div class="a" style="left:1018px;top:757px;width:2.5px;height:22px;background:#333;border-radius:1px"></div>
<svg class="a" style="left:1032px;top:760px;" width="21" height="16" viewBox="0 0 21 16"><path d="M0 3.5 L5.5 3.5 L7 0.5 L14 0.5 L15.5 3.5 L21 3.5 L21 16 L0 16 Z" fill="#b4b4b4"/><circle cx="10.5" cy="9.5" r="3.6" fill="none" stroke="#282828" stroke-width="1.6"/></svg>
<svg class="a" style="left:1062px;top:757px;" width="23" height="19" viewBox="0 0 23 19"><path d="M0.5 11.5 C4 5.5 13 5.5 16.5 11.5 C13 17.5 4 17.5 0.5 11.5 Z" fill="#444"/><circle cx="8.5" cy="11.5" r="3" fill="#282828"/><path d="M10 3 L13 3 L14 1 L18.5 1 L19.5 3 L22.5 3 L22.5 10 L16 10 Z" fill="#444"/><circle cx="16.8" cy="5.5" r="1.6" fill="#282828"/></svg>
<div class="a" style="left:1095.4px;top:757px;width:2.5px;height:22px;background:#333;border-radius:1px"></div>
<div class="a" style="left:1104.7px;top:755px;width:98.3px;height:26px;background:#1e1e1e;border-radius:4px;box-shadow:inset 0 0 0 1px #2a2a2a"></div>
<div class="a t" style="left:1117.4px;top:760.80px;font-size:17.36px;color:#949494;font-weight:400;font-family:'Liberation Sans',sans-serif;transform-origin:0 0;transform:scaleX(0.8929);">0:00:11:18</div>
<div class="a" style="left:1979px;top:37px;width:17px;height:748px;background:#232323;"></div>
<div class="a t" style="left:1701.7px;top:49.30px;font-size:17.70px;color:#a5a5a5;font-weight:400;font-family:'Liberation Sans',sans-serif;transform-origin:0 0;transform:scaleX(0.8929);">Info</div>
<div class="a t" style="left:1701.7px;top:92.30px;font-size:17.70px;color:#a5a5a5;font-weight:400;font-family:'Liberation Sans',sans-serif;transform-origin:0 0;transform:scaleX(0.8929);">Audio</div>
<div class="a t" style="left:1701.7px;top:135.30px;font-size:17.70px;color:#a5a5a5;font-weight:400;font-family:'Liberation Sans',sans-serif;transform-origin:0 0;transform:scaleX(0.8929);">Preview</div>
<div class="a" style="left:1686px;top:76.3px;width:291.5px;height:2.3px;background:#191919;"></div>
<div class="a" style="left:1686px;top:119.5px;width:291.5px;height:2.3px;background:#191919;"></div>
<div class="a" style="left:1686px;top:162.3px;width:291.5px;height:2.3px;background:#191919;"></div>
<div class="a t" style="left:1701px;top:407.20px;font-size:17.70px;color:#a5a5a5;font-weight:400;font-family:'Liberation Sans',sans-serif;transform-origin:0 0;transform:scaleX(0.8929);">Libraries</div>
<div class="a t" style="left:1701px;top:450.20px;font-size:17.70px;color:#a5a5a5;font-weight:400;font-family:'Liberation Sans',sans-serif;transform-origin:0 0;transform:scaleX(0.8929);">Tracker</div>
<div class="a t" style="left:1701px;top:493.20px;font-size:17.70px;color:#a5a5a5;font-weight:400;font-family:'Liberation Sans',sans-serif;transform-origin:0 0;transform:scaleX(0.8929);">Align</div>
<div class="a t" style="left:1701px;top:536.20px;font-size:17.70px;color:#a5a5a5;font-weight:400;font-family:'Liberation Sans',sans-serif;transform-origin:0 0;transform:scaleX(0.8929);">Paragraph</div>
<div class="a t" style="left:1701px;top:579.20px;font-size:17.70px;color:#a5a5a5;font-weight:400;font-family:'Liberation Sans',sans-serif;transform-origin:0 0;transform:scaleX(0.8929);">Character</div>
<div class="a t" style="left:1701px;top:622.20px;font-size:17.70px;color:#a5a5a5;font-weight:400;font-family:'Liberation Sans',sans-serif;transform-origin:0 0;transform:scaleX(0.8929);">Content-Aware Fill</div>
<div class="a t" style="left:1701px;top:665.20px;font-size:17.70px;color:#a5a5a5;font-weight:400;font-family:'Liberation Sans',sans-serif;transform-origin:0 0;transform:scaleX(0.8929);">Brushes</div>
<div class="a t" style="left:1701px;top:708.20px;font-size:17.70px;color:#a5a5a5;font-weight:400;font-family:'Liberation Sans',sans-serif;transform-origin:0 0;transform:scaleX(0.8929);">Paint</div>
<div class="a" style="left:1686px;top:434.8px;width:291.5px;height:2.3px;background:#191919;"></div>
<div class="a" style="left:1686px;top:477.8px;width:291.5px;height:2.3px;background:#191919;"></div>
<div class="a" style="left:1686px;top:520.8px;width:291.5px;height:2.3px;background:#191919;"></div>
<div class="a" style="left:1686px;top:563.8px;width:291.5px;height:2.3px;background:#191919;"></div>
<div class="a" style="left:1686px;top:606.8px;width:291.5px;height:2.3px;background:#191919;"></div>
<div class="a" style="left:1686px;top:649.8px;width:291.5px;height:2.3px;background:#191919;"></div>
<div class="a" style="left:1686px;top:692.8px;width:291.5px;height:2.3px;background:#191919;"></div>
<div class="a" style="left:1686px;top:735.8px;width:291.5px;height:2.3px;background:#191919;"></div>
<div class="a" style="left:1684px;top:166px;width:295px;height:229px;background:#282828;box-shadow:inset 0 0 0 1.6px #2f80d8"></div>
<div class="a t" style="left:1701.3px;top:179.20px;font-size:16.91px;color:#d2d2d2;font-weight:400;font-family:'Liberation Sans',sans-serif;transform-origin:0 0;transform:scaleX(0.8929);">Effects &amp; Presets</div>
<svg class="a" style="left:1951.5px;top:181px;" width="12" height="12" viewBox="0 0 12 12"><rect x="0" y="0.00" width="12" height="1.5" fill="#b8b8b8"/><rect x="0" y="4.40" width="12" height="1.5" fill="#b8b8b8"/><rect x="0" y="8.80" width="12" height="1.5" fill="#b8b8b8"/></svg>
<div class="a" style="left:1692.6px;top:210.5px;width:278px;height:25.7px;background:#161616;border-radius:4px"></div>
<svg class="a" style="left:1700px;top:213px;" width="27" height="18" viewBox="0 0 27 18"><circle cx="10.5" cy="7" r="5" fill="none" stroke="#3a90e8" stroke-width="1.7"/><path d="M7 10.8 L1.8 16" stroke="#3a90e8" stroke-width="1.9" stroke-linecap="round"/><path d="M18.8 10.3 L25.5 10.3 L22.1 13.8 Z" fill="#3a90e8"/></svg>
<div class="a t" style="left:1733px;top:217.80px;font-size:16.91px;color:#d0d0d0;font-weight:400;font-family:'Liberation Sans',sans-serif;transform-origin:0 0;transform:scaleX(0.8929);">large scale</div>
<svg class="a" style="left:1953.5px;top:218px;" width="13" height="13" viewBox="0 0 13 13"><path d="M1 1 L11.5 11.5 M11.5 1 L1 11.5" stroke="#d4d4d4" stroke-width="2"/></svg>
<div class="a" style="left:1685.6px;top:240px;width:291.8px;height:2.3px;background:#141414;"></div>
<div class="a" style="left:1685.6px;top:264.8px;width:291.8px;height:1.2px;background:#222222;"></div>
<div class="a" style="left:1685.6px;top:289.4px;width:291.8px;height:1.2px;background:#222222;"></div>
<div class="a" style="left:1685.6px;top:313.9px;width:291.8px;height:1.2px;background:#222222;"></div>
<div class="a" style="left:1685.6px;top:338.5px;width:291.8px;height:1.2px;background:#222222;"></div>
<div class="a" style="left:1685.6px;top:339.7px;width:291.8px;height:23px;background:#333333;"></div>
<div class="a" style="left:1685.6px;top:362.6px;width:291.8px;height:2.4px;background:#151515;"></div>
<svg class="a" style="left:1693.5px;top:251px;" width="11" height="7" viewBox="0 0 11 7"><path d="M0.8 0.8 L5.5 5.5 L10.2 0.8" fill="none" stroke="#b0b0b0" stroke-width="1.5"/></svg>
<div class="a t" style="left:1706.3px;top:245.70px;font-size:17.47px;color:#a5a5a5;font-weight:400;font-family:'Liberation Sans',sans-serif;transform-origin:0 0;transform:scaleX(0.8929);">*</div>
<div class="a t" style="left:1718px;top:245.70px;font-size:17.47px;color:#a5a5a5;font-weight:400;font-family:'Liberation Sans',sans-serif;transform-origin:0 0;transform:scaleX(0.8929);">Animation Presets</div>
<svg class="a" style="left:1718px;top:275.5px;" width="11" height="7" viewBox="0 0 11 7"><path d="M0.8 0.8 L5.5 5.5 L10.2 0.8" fill="none" stroke="#b0b0b0" stroke-width="1.5"/></svg>
<svg class="a" style="left:1732px;top:269px;" width="21" height="16.5" viewBox="0 0 21 16.5"><rect x="0" y="3" width="21" height="13.5" fill="#b8b8b8"/><rect x="1.5" y="0.5" width="6" height="1.3" fill="#b8b8b8"/></svg>
<div class="a t" style="left:1760px;top:270.10px;font-size:17.47px;color:#a5a5a5;font-weight:400;font-family:'Liberation Sans',sans-serif;transform-origin:0 0;transform:scaleX(0.8929);">Presets</div>
<svg class="a" style="left:1742.5px;top:300px;" width="11" height="7" viewBox="0 0 11 7"><path d="M0.8 0.8 L5.5 5.5 L10.2 0.8" fill="none" stroke="#b0b0b0" stroke-width="1.5"/></svg>
<svg class="a" style="left:1756.7px;top:293.5px;" width="20.5" height="16.5" viewBox="0 0 20.5 16.5"><rect x="0" y="3" width="20.5" height="13.5" fill="#b8b8b8"/><rect x="1.5" y="0.5" width="6" height="1.3" fill="#b8b8b8"/></svg>
<div class="a t" style="left:1784.5px;top:294.30px;font-size:17.47px;color:#a5a5a5;font-weight:400;font-family:'Liberation Sans',sans-serif;transform-origin:0 0;transform:scaleX(0.8929);">Text</div>
<svg class="a" style="left:1766.7px;top:324.5px;" width="11" height="7" viewBox="0 0 11 7"><path d="M0.8 0.8 L5.5 5.5 L10.2 0.8" fill="none" stroke="#b0b0b0" stroke-width="1.5"/></svg>
<svg class="a" style="left:1780.8px;top:318px;" width="20.7" height="16.5" viewBox="0 0 20.7 16.5"><rect x="0" y="3" width="20.7" height="13.5" fill="#b8b8b8"/><rect x="1.5" y="0.5" width="6" height="1.3" fill="#b8b8b8"/></svg>
<div class="a t" style="left:1808.5px;top:318.70px;font-size:17.47px;color:#a5a5a5;font-weight:400;font-family:'Liberation Sans',sans-serif;transform-origin:0 0;transform:scaleX(0.8929);">Scale</div>
<svg class="a" style="left:1807px;top:343.2px;" width="17.5" height="16.2" viewBox="0 0 17.5 16.2"><path d="M0 3.5 L1.5 0 L7.5 0 L7.5 2.8 L8.8 2.8 L8.8 0 L16 0 L17.3 3.5 L17.3 16 L0 16 Z" fill="#b0b0b0"/><path d="M7.2 14.8 C7.8 11 8 7.5 9 5.5 C9.5 4.5 10.3 4.3 11 4.6 M6.5 8 L10.5 8 M10.5 8.5 L15 13.5 M15 8.5 L10.5 13.5" fill="none" stroke="#333" stroke-width="1"/></svg>
<div class="a" style="left:1829.8px;top:340.7px;width:91.9px;height:20.1px;background:#a3a3a3;"></div>
<div class="a t" style="left:1833.5px;top:344.00px;font-size:16.69px;color:#1c1c1c;font-weight:400;font-family:'Liberation Sans',sans-serif;transform-origin:0 0;transform:scaleX(0.8929);">Large Scale</div>
<svg class="a" style="left:1950px;top:368px;" width="18.5" height="17.5" viewBox="0 0 18.5 17.5"><path d="M0 0 L18.5 0 L18.5 17.5 L9 17.5 L9 9.5 L0 9.5 Z" fill="#c4c4c4"/><path d="M1.5 11 L7.5 11 L7.5 16.5 Z" fill="#c4c4c4"/></svg>
<div class="a" style="left:1976px;top:365px;width:1.3px;height:23px;background:#111;"></div>
<svg class="a" style="left:16px;top:807px;" width="9.5" height="9" viewBox="0 0 9.5 9"><path d="M0.8 0.8 L8.2 8.2 M8.2 0.8 L0.8 8.2" stroke="#a8a8a8" stroke-width="1.3"/></svg>
<div class="a" style="left:38.5px;top:802px;width:14.7px;height:14px;background:#a8977a;"></div>
<div class="a t" style="left:68.6px;top:803.00px;font-size:16.91px;color:#c4c4c4;font-weight:400;font-family:'Liberation Sans',sans-serif;transform-origin:0 0;transform:scaleX(0.8929);">Comp 1</div>
<svg class="a" style="left:137px;top:806px;" width="12.6" height="12" viewBox="0 0 12.6 12"><rect x="0" y="0.00" width="12.6" height="1.5" fill="#b4b4b4"/><rect x="0" y="4.30" width="12.6" height="1.5" fill="#b4b4b4"/><rect x="0" y="8.60" width="12.6" height="1.5" fill="#b4b4b4"/></svg>
<div class="a t" style="left:20.3px;top:837.70px;font-size:21.30px;color:#3b9df0;font-weight:700;font-family:'Liberation Sans',sans-serif;">0:00:11:18</div>
<div class="a t" style="left:17.5px;top:860.30px;font-size:15.79px;color:#1b70c4;font-weight:400;font-family:'Liberation Sans',sans-serif;transform-origin:0 0;transform:scaleX(0.8929);">00348 (30.00 fps)</div>
<div class="a" style="left:145.6px;top:842px;width:378.4px;height:25.6px;background:#161616;border-radius:4px"></div>
<svg class="a" style="left:154px;top:845px;" width="27" height="18" viewBox="0 0 27 18"><circle cx="10.5" cy="6" r="4.6" fill="none" stroke="#b4b4b4" stroke-width="1.4"/><path d="M7.2 9.5 L1.8 15.5" stroke="#b4b4b4" stroke-width="1.5" stroke-linecap="round"/><path d="M19.5 9.5 L25.5 9.5 L22.5 12.8 Z" fill="#b4b4b4"/></svg>
<svg class="a" style="left:546px;top:846.5px;" width="26" height="19" viewBox="0 0 26 19"><path d="M0.5 3 L5 3" stroke="#b4b4b4" stroke-width="1.3"/><rect x="3.5" y="1.3" width="6" height="3.6" rx="1" fill="#b4b4b4"/><path d="M9 3 L19 3 M11.8 3 L11.8 11 L19 11" fill="none" stroke="#b4b4b4" stroke-width="1.6"/><rect x="16.5" y="0.5" width="6.5" height="4.5" fill="#b4b4b4"/><rect x="16.5" y="8.5" width="6.5" height="4.5" fill="#b4b4b4"/><path d="M18.5 14.5 L25 14.5 L21.8 18.2 Z" fill="#b4b4b4"/></svg>
<svg class="a" style="left:595px;top:845.5px;" width="24" height="19" viewBox="0 0 24 19"><path d="M5 8 C5 2.5 8.5 0.3 12 0.3 C15.5 0.3 19 2.5 19 8 Z" fill="#b4b4b4"/><rect x="3" y="6" width="18" height="4" fill="#b4b4b4"/><circle cx="9.5" cy="5" r="1.5" fill="#282828"/><circle cx="14.5" cy="5" r="1.5" fill="#282828"/><rect x="0" y="10.5" width="23.5" height="8" fill="#6a6a6a"/><rect x="10.5" y="8" width="3.2" height="8.5" rx="1.5" fill="#b4b4b4"/></svg>
<svg class="a" style="left:634px;top:844.5px;" width="21" height="21" viewBox="0 0 21 21"><rect x="6" y="0.5" width="14" height="15.5" fill="#b4b4b4"/><rect x="0.5" y="5" width="5" height="15.5" fill="#b4b4b4"/><rect x="0.5" y="16.5" width="14" height="4" fill="#b4b4b4"/><rect x="1.2" y="6.5" width="2.2" height="12.5" fill="#3a3a3a"/><rect x="9.5" y="7.5" width="7" height="1.5" fill="#3a3a3a"/><rect x="7" y="2.0" width="1.3" height="1.3" fill="#3a3a3a"/><rect x="17.7" y="2.0" width="1.3" height="1.3" fill="#3a3a3a"/><rect x="7" y="5.0" width="1.3" height="1.3" fill="#3a3a3a"/><rect x="17.7" y="5.0" width="1.3" height="1.3" fill="#3a3a3a"/><rect x="7" y="8.0" width="1.3" height="1.3" fill="#3a3a3a"/><rect x="17.7" y="8.0" width="1.3" height="1.3" fill="#3a3a3a"/><rect x="7" y="11.0" width="1.3" height="1.3" fill="#3a3a3a"/><rect x="17.7" y="11.0" width="1.3" height="1.3" fill="#3a3a3a"/><rect x="7" y="14.0" width="1.3" height="1.3" fill="#3a3a3a"/><rect x="17.7" y="14.0" width="1.3" height="1.3" fill="#3a3a3a"/></svg>
<svg class="a" style="left:671px;top:844.5px;" width="21" height="21" viewBox="0 0 21 21"><circle cx="7" cy="14" r="5.8" fill="none" stroke="#b4b4b4" stroke-width="1.3"/><circle cx="9.8" cy="11.2" r="5.8" fill="#282828" stroke="#b4b4b4" stroke-width="1.3"/><circle cx="13.5" cy="7.5" r="6.2" fill="#6a6a6a" stroke="#b4b4b4" stroke-width="1.4"/></svg>
<svg class="a" style="left:718px;top:843px;" width="24" height="22" viewBox="0 0 24 22"><rect x="2.8" y="3.8" width="20" height="17.5" fill="none" stroke="#b4b4b4" stroke-width="1.5"/><path d="M6 9 C10 9 11 11 13 14.5 C15 17.5 16.5 18 20 18" fill="none" stroke="#b4b4b4" stroke-width="1.5"/><path d="M8 0 L8 3.5 M12.5 1.5 L12.5 3.5 M17 0 L17 3.5 M0 8 L2.5 8 M0 12 L2.5 12 M0 16 L2.5 16" stroke="#b4b4b4" stroke-width="1.2"/></svg>
<div class="a" style="left:3px;top:880.3px;width:761.5px;height:2.1px;background:#121212;"></div>
<svg class="a" style="left:11px;top:891px;" width="16" height="11" viewBox="0 0 16 11"><path d="M0.5 5.5 C4 0.3 12 0.3 15.5 5.5 C12 10.7 4 10.7 0.5 5.5 Z" fill="#b4b4b4"/><circle cx="8" cy="5.5" r="2.6" fill="#282828"/><circle cx="8" cy="5.5" r="1.2" fill="#b4b4b4"/></svg>
<svg class="a" style="left:30.5px;top:888.5px;" width="18" height="16" viewBox="0 0 18 16"><path d="M0.5 5 L4 5 L8.5 0.8 L8.5 15.2 L4 11 L0.5 11 Z" fill="#b4b4b4"/><path d="M11 4.5 C12.5 6.5 12.5 9.5 11 11.5 M13.5 2 C16.5 5.5 16.5 10.5 13.5 14" fill="none" stroke="#b4b4b4" stroke-width="1.4"/></svg>
<svg class="a" style="left:55px;top:890.5px;" width="11" height="11" viewBox="0 0 11 11"><circle cx="5.5" cy="5.5" r="5.2" fill="#b4b4b4"/></svg>
<svg class="a" style="left:75.5px;top:887px;" width="14" height="15" viewBox="0 0 14 15"><path d="M3.2 7 L3.2 4.5 C3.2 0.5 10.8 0.5 10.8 4.5 L10.8 7" fill="none" stroke="#b4b4b4" stroke-width="1.8"/><rect x="0.5" y="6.5" width="13" height="8.5" fill="#b4b4b4"/><circle cx="7" cy="10" r="1.3" fill="#282828"/><rect x="6.4" y="10" width="1.2" height="3" fill="#282828"/></svg>
<div class="a" style="left:99.5px;top:888px;width:1.5px;height:15.5px;background:#141414;"></div>
<div class="a" style="left:145px;top:888px;width:1.5px;height:15.5px;background:#141414;"></div>
<div class="a" style="left:192.5px;top:888px;width:1.5px;height:15.5px;background:#141414;"></div>
<div class="a" style="left:378.6px;top:888px;width:1.5px;height:15.5px;background:#141414;"></div>
<div class="a" style="left:574.8px;top:888px;width:1.5px;height:15.5px;background:#141414;"></div>
<div class="a" style="left:742.5px;top:888px;width:1.5px;height:15.5px;background:#141414;"></div>
<svg class="a" style="left:119px;top:887px;" width="18" height="17" viewBox="0 0 18 17"><path d="M1 1 L8.5 1 L17.5 10 L10 17 L1 8.5 Z" fill="#b4b4b4"/><circle cx="4.6" cy="4.6" r="1.5" fill="#282828"/></svg>
<div class="a t" style="left:152.5px;top:888.60px;font-size:14.34px;color:#979797;font-weight:400;font-family:'Liberation Sans',sans-serif;transform-origin:0 0;transform:scaleX(0.8929);">#</div>
<div class="a t" style="left:200.6px;top:888.60px;font-size:14.34px;color:#979797;font-weight:400;font-family:'Liberation Sans',sans-serif;transform-origin:0 0;transform:scaleX(0.8929);">Source Name</div>
<svg class="a" style="left:385.5px;top:887.8px;" width="18" height="14" viewBox="0 0 18 14"><path d="M3.5 8 C3.5 2.5 6 0.3 9 0.3 C12 0.3 14.5 2.5 14.5 8 Z" fill="#b4b4b4"/><circle cx="7" cy="4.8" r="1.3" fill="#282828"/><circle cx="11" cy="4.8" r="1.3" fill="#282828"/><rect x="7.6" y="7" width="2.8" height="7" rx="1.2" fill="#b4b4b4"/><rect x="0" y="10.5" width="6" height="1.3" fill="#b4b4b4"/><rect x="12" y="10.5" width="6" height="1.3" fill="#b4b4b4"/></svg>
<svg class="a" style="left:409px;top:888px;" width="14" height="14" viewBox="0 0 14 14"><circle cx="7" cy="7" r="3" fill="none" stroke="#b4b4b4" stroke-width="1.5"/><path d="M11.30 7.00 L14.00 7.00" stroke="#b4b4b4" stroke-width="1.3"/><path d="M10.04 10.04 L11.95 11.95" stroke="#b4b4b4" stroke-width="1.3"/><path d="M7.00 11.30 L7.00 14.00" stroke="#b4b4b4" stroke-width="1.3"/><path d="M3.96 10.04 L2.05 11.95" stroke="#b4b4b4" stroke-width="1.3"/><path d="M2.70 7.00 L0.00 7.00" stroke="#b4b4b4" stroke-width="1.3"/><path d="M3.96 3.96 L2.05 2.05" stroke="#b4b4b4" stroke-width="1.3"/><path d="M7.00 2.70 L7.00 0.00" stroke="#b4b4b4" stroke-width="1.3"/><path d="M10.04 3.96 L11.95 2.05" stroke="#b4b4b4" stroke-width="1.3"/></svg>
<svg class="a" style="left:429px;top:887.5px;" width="16" height="15" viewBox="0 0 16 15"><rect x="0.0" y="0.0" width="2" height="2" fill="#b4b4b4" transform="rotate(45 1.0 1.0)"/><rect x="2.5" y="2.4" width="2" height="2" fill="#b4b4b4" transform="rotate(45 3.5 3.4)"/><rect x="5.0" y="4.7" width="2" height="2" fill="#b4b4b4" transform="rotate(45 6.0 5.7)"/><rect x="7.5" y="7.1" width="2" height="2" fill="#b4b4b4" transform="rotate(45 8.5 8.1)"/><rect x="10.0" y="9.4" width="2" height="2" fill="#b4b4b4" transform="rotate(45 11.0 10.4)"/><rect x="12.5" y="11.8" width="2" height="2" fill="#b4b4b4" transform="rotate(45 13.5 12.8)"/></svg>
<svg class="a" style="left:451px;top:886px;" width="16" height="18" viewBox="0 0 16 18"><path d="M5.5 17.5 C6.3 12 6.5 6 8 3 C8.8 1.3 10 0.8 11 1.2" fill="none" stroke="#b4b4b4" stroke-width="1.3"/><path d="M3.5 7 L10 7" stroke="#b4b4b4" stroke-width="1.3"/><path d="M9 7.5 L15 16 M15 7.5 L9 16" stroke="#b4b4b4" stroke-width="1.4"/></svg>
<svg class="a" style="left:470.5px;top:887.5px;" width="18" height="17" viewBox="0 0 18 17"><rect x="2.5" y="0.5" width="15" height="12.5" fill="#b4b4b4"/><path d="M0.8 2 L0.8 16 L15 16" fill="none" stroke="#b4b4b4" stroke-width="1.4"/><rect x="6.5" y="5.8" width="7" height="1.4" fill="#282828"/><rect x="3.5" y="1.5" width="1.2" height="1.2" fill="#282828"/><rect x="15.3" y="1.5" width="1.2" height="1.2" fill="#282828"/><rect x="3.5" y="4.1" width="1.2" height="1.2" fill="#282828"/><rect x="15.3" y="4.1" width="1.2" height="1.2" fill="#282828"/><rect x="3.5" y="6.7" width="1.2" height="1.2" fill="#282828"/><rect x="15.3" y="6.7" width="1.2" height="1.2" fill="#282828"/><rect x="3.5" y="9.3" width="1.2" height="1.2" fill="#282828"/><rect x="15.3" y="9.3" width="1.2" height="1.2" fill="#282828"/><rect x="3.5" y="11.9" width="1.2" height="1.2" fill="#282828"/><rect x="15.3" y="11.9" width="1.2" height="1.2" fill="#282828"/></svg>
<svg class="a" style="left:493px;top:886px;" width="19" height="20" viewBox="0 0 19 20"><circle cx="6" cy="13.5" r="5.2" fill="none" stroke="#b4b4b4" stroke-width="1.2"/><circle cx="8.5" cy="11" r="5.2" fill="#282828" stroke="#b4b4b4" stroke-width="1.2"/><circle cx="12.2" cy="7.2" r="6" fill="#6a6a6a" stroke="#b4b4b4" stroke-width="1.3"/></svg>
<svg class="a" style="left:515.5px;top:888px;" width="16" height="16" viewBox="0 0 16 16"><circle cx="7.8" cy="7.8" r="6.8" fill="none" stroke="#b4b4b4" stroke-width="1.6"/><path d="M12.6 3 A6.8 6.8 0 0 1 3 12.6 Z" fill="#b4b4b4"/></svg>
<svg class="a" style="left:538px;top:889px;" width="15" height="14" viewBox="0 0 15 14"><path d="M7.3 0.8 L13.5 3.8 L13.5 10.3 L7.3 13.3 L1 10.3 L1 3.8 Z M1 3.8 L7.3 6.8 L13.5 3.8 M7.3 6.8 L7.3 13.3" fill="none" stroke="#b4b4b4" stroke-width="1.3" stroke-linejoin="round"/></svg>
<div class="a t" style="left:583px;top:888.60px;font-size:14.67px;color:#979797;font-weight:400;font-family:'Liberation Sans',sans-serif;transform-origin:0 0;transform:scaleX(0.8929);">Parent &amp; Link</div>
<div class="a" style="left:3px;top:906.8px;width:761.5px;height:2.8px;background:#121212;"></div>
<div class="a" style="left:3px;top:909.6px;width:761.5px;height:22.2px;background:#494949;"></div>
<div class="a" style="left:9px;top:911px;width:18px;height:17.6px;background:#3b3b3b;"></div>
<svg class="a" style="left:11px;top:914.5px;" width="16" height="11" viewBox="0 0 16 11"><path d="M0.5 5.5 C4 0.3 12 0.3 15.5 5.5 C12 10.7 4 10.7 0.5 5.5 Z" fill="#b4b4b4"/><circle cx="8" cy="5.5" r="2.6" fill="#3b3b3b"/><circle cx="8" cy="5.5" r="1.2" fill="#b4b4b4"/></svg>
<div class="a" style="left:52px;top:911px;width:18px;height:17.6px;background:#3b3b3b;"></div>
<div class="a" style="left:73px;top:911px;width:18.7px;height:17.6px;background:#3b3b3b;"></div>
<svg class="a" style="left:108px;top:914.5px;" width="7" height="12.5" viewBox="0 0 7 12.5"><path d="M1 1 L5.5 6.2 L1 11.5" fill="none" stroke="#b4b4b4" stroke-width="1.4"/></svg>
<div class="a" style="left:124.6px;top:912px;width:17.1px;height:17px;background:#b83a3a;"></div>
<div class="a t" style="left:155.5px;top:912.90px;font-size:16.80px;color:#c8c8c8;font-weight:400;font-family:'Liberation Sans',sans-serif;transform-origin:0 0;transform:scaleX(0.8929);">1</div>
<div class="a t" style="left:198.5px;top:911.68px;font-size:17.50px;color:#c0c0c0;font-weight:400;font-family:'Liberation Serif',serif;">T</div>
<div class="a" style="left:219.2px;top:909.6px;width:158.6px;height:22.2px;background:#a9a9a9;"></div>
<div class="a t" style="left:224.8px;top:912.00px;font-size:17.58px;color:#1e1e1e;font-weight:400;font-family:'Liberation Sans',sans-serif;transform-origin:0 0;transform:scaleX(0.8929);-webkit-text-stroke:0.45px #1e1e1e">The Magic of Sunset</div>
<div class="a" style="left:385px;top:910.8px;width:19px;height:18.2px;background:#3d3d3d;"></div>
<div class="a" style="left:406.8px;top:910.8px;width:18.399999999999977px;height:18.2px;background:#3d3d3d;"></div>
<div class="a" style="left:428px;top:910.8px;width:18.899999999999977px;height:18.2px;background:#3d3d3d;"></div>
<div class="a" style="left:450px;top:910.8px;width:18.399999999999977px;height:18.2px;background:#3d3d3d;"></div>
<svg class="a" style="left:385.5px;top:913.5px;" width="18" height="14" viewBox="0 0 18 14"><path d="M3.5 8 C3.5 2.5 6 0.3 9 0.3 C12 0.3 14.5 2.5 14.5 8 Z" fill="#b4b4b4"/><circle cx="7" cy="4.8" r="1.3" fill="#282828"/><circle cx="11" cy="4.8" r="1.3" fill="#282828"/><rect x="7.6" y="7" width="2.8" height="7" rx="1.2" fill="#b4b4b4"/><rect x="0" y="10.5" width="6" height="1.3" fill="#b4b4b4"/><rect x="12" y="10.5" width="6" height="1.3" fill="#b4b4b4"/></svg>
<svg class="a" style="left:409px;top:913px;" width="14" height="14" viewBox="0 0 14 14"><circle cx="7" cy="7" r="3" fill="none" stroke="#8a8a8a" stroke-width="1.5"/><path d="M11.30 7.00 L14.00 7.00" stroke="#8a8a8a" stroke-width="1.3"/><path d="M10.04 10.04 L11.95 11.95" stroke="#8a8a8a" stroke-width="1.3"/><path d="M7.00 11.30 L7.00 14.00" stroke="#8a8a8a" stroke-width="1.3"/><path d="M3.96 10.04 L2.05 11.95" stroke="#8a8a8a" stroke-width="1.3"/><path d="M2.70 7.00 L0.00 7.00" stroke="#8a8a8a" stroke-width="1.3"/><path d="M3.96 3.96 L2.05 2.05" stroke="#8a8a8a" stroke-width="1.3"/><path d="M7.00 2.70 L7.00 0.00" stroke="#8a8a8a" stroke-width="1.3"/><path d="M10.04 3.96 L11.95 2.05" stroke="#8a8a8a" stroke-width="1.3"/></svg>
<svg class="a" style="left:430px;top:913px;" width="16" height="16" viewBox="0 0 16 16"><path d="M1 15 L14.5 1" stroke="#b4b4b4" stroke-width="1.5"/></svg>
<svg class="a" style="left:451px;top:911.5px;" width="16" height="18" viewBox="0 0 16 18"><path d="M5.5 17.5 C6.3 12 6.5 6 8 3 C8.8 1.3 10 0.8 11 1.2" fill="none" stroke="#b4b4b4" stroke-width="1.3"/><path d="M3.5 7 L10 7" stroke="#b4b4b4" stroke-width="1.3"/><path d="M9 7.5 L15 16 M15 7.5 L9 16" stroke="#b4b4b4" stroke-width="1.4"/></svg>
<div class="a" style="left:493px;top:910.8px;width:18.30000000000001px;height:18.2px;background:#3b3b3b;"></div>
<div class="a" style="left:514px;top:910.8px;width:18.799999999999955px;height:18.2px;background:#3b3b3b;"></div>
<div class="a" style="left:536px;top:910.8px;width:18px;height:18.2px;background:#3b3b3b;"></div>
<svg class="a" style="left:581.5px;top:913px;" width="18" height="16" viewBox="0 0 18 16"><path d="M9 8 C9 6.5 11 6.5 11 8.2 C11 10.5 7.5 10.8 6.5 8.5 C5.5 5.5 8.5 3.5 11 4 C14.5 4.8 15 9.5 13 11.8 C10.5 14.5 5.5 14 3.5 11 C1 7 3 1.5 8.5 1" fill="none" stroke="#b4b4b4" stroke-width="1.4"/></svg>
<div class="a" style="left:609px;top:911px;width:126.6px;height:19.5px;background:#1e1e1e;"></div>
<div class="a t" style="left:617.7px;top:912.50px;font-size:17.14px;color:#c8c8c8;font-weight:400;font-family:'Liberation Sans',sans-serif;transform-origin:0 0;transform:scaleX(0.8929);">None</div>
<svg class="a" style="left:717.5px;top:915.5px;" width="12" height="8" viewBox="0 0 12 8"><path d="M1 1.2 L5.8 6 L10.6 1.2" fill="none" stroke="#b4b4b4" stroke-width="1.5"/></svg>
<div class="a" style="left:735.6px;top:909.6px;width:28.9px;height:22.2px;background:#4d4d4d;"></div>
<div class="a" style="left:764.5px;top:838px;width:1.9px;height:262.5px;background:#0e0e0e;"></div>
<div class="a" style="left:766.4px;top:852px;width:1204.6px;height:27.2px;background:#242424;"></div>
<div class="a" style="left:766.4px;top:838px;width:1204.6px;height:1.3px;background:#111;"></div>
<div class="a" style="left:775.6px;top:839.3px;width:1185.1px;height:10.8px;background:#686868;"></div>
<div class="a" style="left:766.4px;top:850.1px;width:1204.6px;height:1.9px;background:#111;"></div>
<div class="a" style="left:1960.7px;top:839.3px;width:1.3px;height:10.8px;background:#111;"></div>
<div class="a" style="left:766px;top:839.3px;width:9.6px;height:10.8px;background:#2e8ce8;border-radius:5.4px 0 0 5.4px"></div>
<div class="a" style="left:1962px;top:839.3px;width:8.6px;height:11.1px;background:#2e8ce8;border-radius:0 5.5px 5.5px 0"></div>
<div class="a" style="left:1494px;top:839.3px;width:1.2px;height:10.8px;background:#3a8ee0;"></div>
<div class="a" style="left:766.4px;top:852px;width:1195px;height:27.2px;overflow:hidden">
<div class="a t" style="left:-29.2px;width:80px;text-align:center;top:4.4px;font-size:13.6px;color:#a5a5a5">0:00s</div>
<div class="a" style="left:10px;top:16.2px;width:1px;height:11px;background:#9a9a9a"></div>
<div class="a t" style="left:94.5px;width:80px;text-align:center;top:4.4px;font-size:13.6px;color:#a5a5a5">02s</div>
<div class="a" style="left:134px;top:20.7px;width:1px;height:6.5px;background:#9a9a9a"></div>
<div class="a t" style="left:218.1px;width:80px;text-align:center;top:4.4px;font-size:13.6px;color:#a5a5a5">04s</div>
<div class="a" style="left:258px;top:20.7px;width:1px;height:6.5px;background:#9a9a9a"></div>
<div class="a t" style="left:341.8px;width:80px;text-align:center;top:4.4px;font-size:13.6px;color:#a5a5a5">06s</div>
<div class="a" style="left:381px;top:20.7px;width:1px;height:6.5px;background:#9a9a9a"></div>
<div class="a t" style="left:465.4px;width:80px;text-align:center;top:4.4px;font-size:13.6px;color:#a5a5a5">08s</div>
<div class="a" style="left:505px;top:20.7px;width:1px;height:6.5px;background:#9a9a9a"></div>
<div class="a t" style="left:589.1px;width:80px;text-align:center;top:4.4px;font-size:13.6px;color:#a5a5a5">10s</div>
<div class="a" style="left:629px;top:20.7px;width:1px;height:6.5px;background:#9a9a9a"></div>
<div class="a t" style="left:712.7px;width:80px;text-align:center;top:4.4px;font-size:13.6px;color:#a5a5a5">12s</div>
<div class="a" style="left:752px;top:20.7px;width:1px;height:6.5px;background:#9a9a9a"></div>
<div class="a t" style="left:836.4px;width:80px;text-align:center;top:4.4px;font-size:13.6px;color:#a5a5a5">14s</div>
<div class="a" style="left:876px;top:20.7px;width:1px;height:6.5px;background:#9a9a9a"></div>
<div class="a t" style="left:960.0px;width:80px;text-align:center;top:4.4px;font-size:13.6px;color:#a5a5a5">16s</div>
<div class="a" style="left:1000px;top:20.7px;width:1px;height:6.5px;background:#9a9a9a"></div>
<div class="a t" style="left:1083.7px;width:80px;text-align:center;top:4.4px;font-size:13.6px;color:#a5a5a5">18s</div>
<div class="a" style="left:1123px;top:20.7px;width:1px;height:6.5px;background:#9a9a9a"></div>
</div>
<div class="a" style="left:766.4px;top:879.2px;width:1204.6px;height:1.1px;background:#111;"></div>
<div class="a" style="left:775.6px;top:880.3px;width:1185.1px;height:21.6px;background:#666666;"></div>
<div class="a" style="left:1960.7px;top:880.3px;width:1.3px;height:21.6px;background:#111;"></div>
<div class="a" style="left:766px;top:880.3px;width:9.6px;height:21.6px;background:#2e8ce8;border-radius:8px 0 0 8px"></div>
<div class="a" style="left:1962px;top:880.3px;width:7px;height:21.6px;background:#2e8ce8;border-radius:0 6px 6px 0"></div>
<div class="a" style="left:766.4px;top:901.9px;width:1205px;height:2.1px;background:#111;"></div>
<div class="a" style="left:775.6px;top:904px;width:1185.1px;height:4.2px;background:#12c224;"></div>
<div class="a" style="left:766.4px;top:908.2px;width:1228px;height:1.3px;background:#111;"></div>
<div class="a" style="left:766.4px;top:909.3px;width:9.2px;height:22.5px;background:#474747;"></div>
<div class="a" style="left:766.4px;top:931.8px;width:9.2px;height:168.7px;background:#2c2c2c;"></div>
<div class="a" style="left:775.6px;top:931.8px;width:1184.8px;height:168.7px;background:#333333;"></div>
<div class="a" style="left:1960.7px;top:909.5px;width:10.3px;height:22.3px;background:#474747;"></div>
<div class="a" style="left:1960.7px;top:931.8px;width:10.3px;height:168.7px;background:#2c2c2c;"></div>
<div class="a" style="left:1971px;top:909.5px;width:25px;height:191.2px;background:#262626;"></div>
<div class="a" style="left:775.6px;top:909.3px;width:1185.1px;height:22.5px;background:#9c4043;"></div>
<svg class="a" style="left:775.6px;top:909.3px" width="1184.2" height="22.5"><filter id="nz" x="0" y="0" width="100%" height="100%"><feTurbulence type="fractalNoise" baseFrequency="0.9" numOctaves="2" seed="3"/><feColorMatrix values="0 0 0 0 1  0 0 0 0 0.8  0 0 0 0 0.8  0 0 0 0.10 0"/></filter><rect width="1184.2" height="22.5" filter="url(#nz)"/></svg>
<div class="a" style="left:775.6px;top:909.3px;width:1185.1px;height:1.3px;background:#c47c7c;"></div>
<div class="a" style="left:775.6px;top:909.3px;width:1.9px;height:22.5px;background:#e0a6a6;"></div>
<div class="a" style="left:803.6px;top:913.8px;width:22.3px;height:22px;background:transparent;box-shadow:inset 0 0 0 1px rgba(70,100,170,0.75)"></div>
<div class="a" style="left:829.3px;top:915.5px;width:91.1px;height:19px;background:transparent;box-shadow:inset 0 0 0 1px rgba(70,100,170,0.75)"></div>
<div class="a" style="left:1493.7px;top:878px;width:1.3px;height:222.5px;background:#3a8ee0;"></div>
<svg class="a" style="left:1486px;top:858.5px;" width="16" height="20" viewBox="0 0 16 20"><path d="M0 2 Q0 0 2 0 L14 0 Q16 0 16 2 L16 11 L8 19.5 L0 11 Z" fill="#2e8ce8"/><path d="M6 8 L10 8 M8 8 L8 14" stroke="#1a3a60" stroke-width="1.2"/></svg>
<svg class="a" style="left:1975.8px;top:883px;" width="16.5" height="20.8" viewBox="0 0 16.5 20.8"><path d="M0 0 L16.5 0 L16.5 14 L8.25 20.8 L0 14 Z" fill="#b0b0b0"/></svg>
<svg class="a" style="left:1971px;top:914px;" width="22" height="18" viewBox="0 0 22 18"><path d="M10 0.5 L1 10 L10 10" fill="none" stroke="#b8b8b8" stroke-width="1.6"/><rect x="10" y="3" width="11.5" height="8.5" fill="#b8b8b8"/><circle cx="9" cy="12" r="3.8" fill="#262626" stroke="#b8b8b8" stroke-width="1.6"/></svg>
<div class="a" style="left:1995px;top:37px;width:4px;height:1065px;background:#161616;"></div>
<div class="a" style="left:0px;top:1100.5px;width:1999px;height:1.5px;background:#141414;"></div>
<div class="a" style="left:0px;top:0px;width:1.2px;height:1102px;background:#333333;"></div>
<div class="a" style="left:1.2px;top:37px;width:1.2px;height:1063px;background:#1e1e1e;"></div>
<div class="a" style="left:1997.3px;top:0px;width:1.7px;height:1102px;background:#8a7058;background:linear-gradient(180deg,#b4a888 0px,#aa9670 170px,#8a7058 320px,#625a55 600px,#5a5650 1000px)"></div>
<div class="a" style="left:1996px;top:0px;width:1.3px;height:1102px;background:#151515;"></div>
<div class="a" style="left:0px;top:1100.8px;width:1999px;height:1.2px;background:#000;"></div>
<svg class="a" style="left:0;top:0" width="1999" height="1102" viewBox="0 0 1999 1102"><path d="M1791.9 347.6 L954.9 901.9000000000001" stroke="#00f000" stroke-width="4.8" stroke-linecap="round"/><path d="M921.8 923.2 L948.4 896.4 L957.4 910 Z" fill="#00f000"/></svg></body></html>
